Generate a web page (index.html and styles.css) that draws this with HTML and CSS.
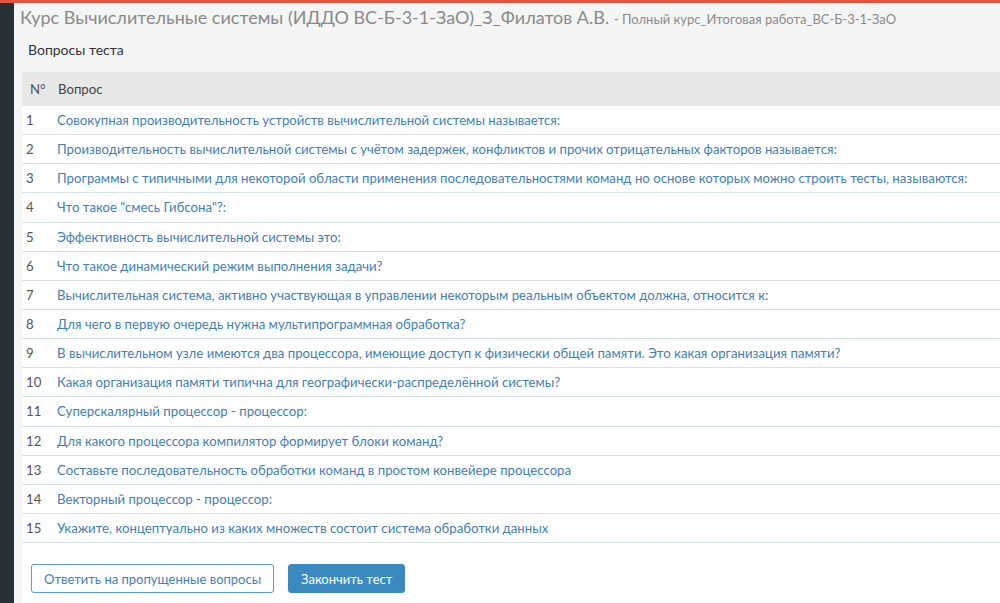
FILE: index.html
```html
<!DOCTYPE html>
<html lang="ru">
<head>
  <meta charset="UTF-8">
  <title>Вопросы теста</title>
  <link rel="stylesheet" href="styles.css">
</head>
<body>
  <div class="layout">
    <aside class="sidebar"></aside>

    <div class="content">
      <!-- Page title -->
      <header class="page-head">
        <h1>Курс Вычислительные системы (ИДДО ВС-Б-3-1-ЗаО)_З_Филатов А.В. <small>- Полный курс_Итоговая работа_ВС-Б-3-1-ЗаО</small></h1>
        <h2>Вопросы теста</h2>
      </header>

      <!-- Questions list -->
      <section class="panel">
        <table class="questions">
          <thead>
            <tr>
              <th class="num">N°</th>
              <th>Вопрос</th>
            </tr>
          </thead>
          <tbody>
            <tr><td class="num">1</td><td><a href="#">Совокупная производительность устройств вычислительной системы называется:</a></td></tr>
            <tr><td class="num">2</td><td><a href="#">Производительность вычислительной системы с учётом задержек, конфликтов и прочих отрицательных факторов называется:</a></td></tr>
            <tr><td class="num">3</td><td><a href="#">Программы с типичными для некоторой области применения последовательностями команд но основе которых можно строить тесты, называются:</a></td></tr>
            <tr><td class="num">4</td><td><a href="#">Что такое "смесь Гибсона"?:</a></td></tr>
            <tr><td class="num">5</td><td><a href="#">Эффективность вычислительной системы это:</a></td></tr>
            <tr><td class="num">6</td><td><a href="#">Что такое динамический режим выполнения задачи?</a></td></tr>
            <tr><td class="num">7</td><td><a href="#">Вычислительная система, активно участвующая в управлении некоторым реальным объектом должна, относится к:</a></td></tr>
            <tr><td class="num">8</td><td><a href="#">Для чего в первую очередь нужна мультипрограммная обработка?</a></td></tr>
            <tr><td class="num">9</td><td><a href="#">В вычислительном узле имеются два процессора, имеющие доступ к физически общей памяти. Это какая организация памяти?</a></td></tr>
            <tr><td class="num">10</td><td><a href="#">Какая организация памяти типична для географически-распределённой системы?</a></td></tr>
            <tr><td class="num">11</td><td><a href="#">Суперскалярный процессор - процессор:</a></td></tr>
            <tr><td class="num">12</td><td><a href="#">Для какого процессора компилятор формирует блоки команд?</a></td></tr>
            <tr><td class="num">13</td><td><a href="#">Составьте последовательность обработки команд в простом конвейере процессора</a></td></tr>
            <tr><td class="num">14</td><td><a href="#">Векторный процессор - процессор:</a></td></tr>
            <tr><td class="num">15</td><td><a href="#">Укажите, концептуально из каких множеств состоит система обработки данных</a></td></tr>
          </tbody>
        </table>

        <div class="actions">
          <button class="btn btn-outline">Ответить на пропущенные вопросы</button>
          <button class="btn btn-primary">Закончить тест</button>
        </div>
      </section>
    </div>
  </div>
</body>
</html>
```

FILE: styles.css
```css
html, body {
  height: 100%;
}

body {
  margin: 0;
  font-family: Lato, "Open Sans", sans-serif;
  font-size: 13px;
  color: #333;
  background-color: #f5f5f5;
  border-top: 3px solid #e5533d;
  box-sizing: border-box;
  overflow: hidden;
}

.layout {
  display: flex;
  height: 100%;
}

.sidebar {
  width: 14px;
  flex-shrink: 0;
  background-color: #263035;
}

.content {
  flex: 1;
  padding-left: 8px;
  display: flex;
  flex-direction: column;
}

/* Title block */
.page-head h1 {
  margin: 2px 0 0 -2px;
  font-size: 18px;
  font-weight: normal;
  color: #8a8a8a;
  white-space: nowrap;
  line-height: 24px;
}

.page-head h1 small {
  font-size: 13px;
}

.page-head h2 {
  margin: 10px 0 0 6px;
  font-size: 14px;
  font-weight: normal;
  color: #333;
  line-height: 18px;
  padding-bottom: 13px;
}

/* White panel with table */
.panel {
  flex: 1;
  background-color: #fff;
}

.questions {
  width: 100%;
  border-collapse: collapse;
  font-size: 13.2px;
}

.questions th {
  background-color: #e8e8e8;
  font-weight: normal;
  text-align: left;
  height: 34px;
  padding: 0 0 0 5px;
  color: #444;
}

.questions td {
  height: 28.15px;
  padding: 0 0 0 4px;
  border-bottom: 1px solid #d6e4e2;
  white-space: nowrap;
}

.questions .num {
  width: 26px;
  color: #555;
}

.questions th.num {
  padding-left: 8px;
  width: 23px;
}

.questions a {
  color: #3f80b8;
  text-decoration: none;
}

/* Buttons */
.actions {
  display: flex;
  gap: 14px;
  padding: 21px 0 0 9px;
}

.btn {
  font-family: inherit;
  font-size: 13px;
  height: 29px;
  padding: 0 12px;
  border-radius: 3px;
  cursor: pointer;
}

.btn-outline {
  background-color: #fff;
  color: #3f80b8;
  border: 1px solid #5d9cca;
}

.btn-primary {
  background-color: #3a8abf;
  color: #fff;
  border: 1px solid #3a8abf;
}
```
